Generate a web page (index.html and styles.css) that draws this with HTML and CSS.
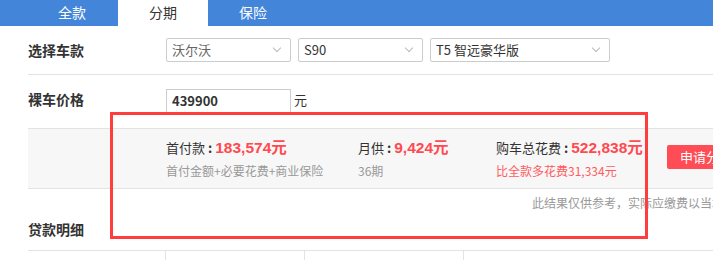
FILE: index.html
```html
<!DOCTYPE html>
<html lang="zh-CN">
<head>
    <meta charset="UTF-8">
    <title>购车计算器</title>
    <link rel="stylesheet" href="styles.css">
</head>
<body>

    <div class="tabs">
        <div class="tab">全款</div>
        <div class="tab active">分期</div>
        <div class="tab">保险</div>
    </div>

    <div class="calc">
        <div class="row row-car">
            <div class="label">选择车款</div>
            <div class="select s-brand">沃尔沃<span class="arrow"></span></div>
            <div class="select s-series">S90<span class="arrow"></span></div>
            <div class="select s-model">T5 智远豪华版<span class="arrow"></span></div>
        </div>

        <div class="row row-price">
            <div class="label">裸车价格</div>
            <div class="price-input">439900</div>
            <span class="unit">元</span>
        </div>

        <div class="result">
            <div class="item item-down">
                <div class="main">首付款<i class="colon">:</i><b>183,574元</b></div>
                <div class="sub">首付金额+必要花费+商业保险</div>
            </div>
            <div class="item item-month">
                <div class="main">月供<i class="colon">:</i><b>9,424元</b></div>
                <div class="sub">36期</div>
            </div>
            <div class="item item-total">
                <div class="main">购车总花费<i class="colon">:</i><b>522,838元</b></div>
                <div class="sub red">比全款多花费31,334元</div>
            </div>
            <div class="apply">申请分期</div>
        </div>

        <div class="note">此结果仅供参考，实际应缴费以当地为准</div>

        <div class="title">贷款明细</div>

        <div class="table">
            <div class="cell c1"></div>
            <div class="cell c2"></div>
            <div class="cell c3"></div>
            <div class="cell c4"></div>
        </div>
    </div>

    <!-- annotation frame -->
    <div class="mark"></div>

</body>
</html>
```

FILE: styles.css
```css
/* General Styles */
body {
    margin: 0;
    width: 713px;
    height: 260px;
    overflow: hidden;
    position: relative;
    font-family: "Noto Sans CJK SC", "Noto Sans", sans-serif;
    font-size: 13px;
    color: #333;
    background: #fff;
}

.tabs {
    display: flex;
    height: 26px;
    background: #4285d9;
}

.tab {
    width: 90px;
    line-height: 24px;
    text-align: center;
    color: #fff;
    font-size: 14px;
}

.tab:first-child {
    width: 118px;
    padding-left: 26px;
    box-sizing: border-box;
}

.tab.active {
    background: #fff;
    color: #333;
}

.calc {
    margin-left: 28px;
    width: 720px;
}

.row {
    display: flex;
    align-items: center;
    border-bottom: 1px solid #e3e3e3;
}

.row-car {
    height: 48px;
}

.label {
    width: 138px;
    font-size: 14px;
    font-weight: bold;
    color: #333;
}

.select {
    position: relative;
    height: 22px;
    line-height: 22px;
    border: 1px solid #ccc;
    border-radius: 2px;
    padding-left: 5px;
    margin-right: 7px;
    font-size: 13px;
    color: #333;
}

.s-brand {
    width: 118px;
    color: #666;
}

.s-series {
    width: 118px;
}

.s-model {
    width: 173px;
}

.arrow {
    position: absolute;
    right: 10px;
    top: 6px;
    width: 5px;
    height: 5px;
    border-right: 1px solid #bbb;
    border-bottom: 1px solid #bbb;
    transform: rotate(45deg);
}

.row-price {
    align-items: flex-start;
    padding-top: 14px;
    height: 39px;
}

.row-price .label {
    line-height: 18px;
    margin-top: 1px;
}

.price-input {
    width: 118px;
    height: 22px;
    line-height: 22px;
    border: 1px solid #ccc;
    padding-left: 5px;
    font-weight: bold;
    font-size: 13px;
}

.unit {
    margin-left: 3px;
    line-height: 22px;
    font-size: 13px;
}

.result {
    display: flex;
    height: 59px;
    background: #f7f7f7;
    border-bottom: 1px solid #e3e3e3;
    padding-left: 138px;
    align-items: center;
}

.item .main {
    font-size: 13px;
    line-height: 20px;
    white-space: nowrap;
}

.item .colon {
    font-style: normal;
    font-weight: bold;
    margin: 0 3px 0 3px;
}

.item .main b {
    color: #ff4a50;
    font-family: "Liberation Sans", "Noto Sans CJK SC", sans-serif;
    font-size: 15.5px;
}

.item .sub {
    margin-top: 5px;
    font-size: 12px;
    color: #999;
    line-height: 16px;
}

.item .sub.red {
    color: #ff5a60;
}

.item-down {
    width: 192px;
}

.item-month {
    width: 138px;
}

.item-total {
    width: 171px;
}

.apply {
    height: 24px;
    line-height: 24px;
    padding: 0 13px;
    background: #ff4c55;
    color: #fff;
    font-size: 13px;
    border-radius: 2px;
    white-space: nowrap;
    margin-top: -3px;
}

.note {
    padding-left: 504px;
    margin-top: 6px;
    font-size: 12px;
    color: #999;
    white-space: nowrap;
    line-height: 16px;
}

.title {
    margin-top: 8px;
    font-size: 14px;
    font-weight: bold;
    line-height: 20px;
}

.table {
    display: flex;
    margin-top: 11px;
    height: 10px;
    border-top: 1px solid #e3e3e3;
}

.cell {
    border-right: 1px solid #e3e3e3;
}

.c1 {
    width: 137px;
}

.c2 {
    width: 138px;
}

.c3 {
    width: 158px;
}

.c4 {
    width: 200px;
    border-right: none;
}

.mark {
    position: absolute;
    left: 110px;
    top: 112px;
    width: 532px;
    height: 121px;
    border: 3px solid #ff3d3d;
}
```
